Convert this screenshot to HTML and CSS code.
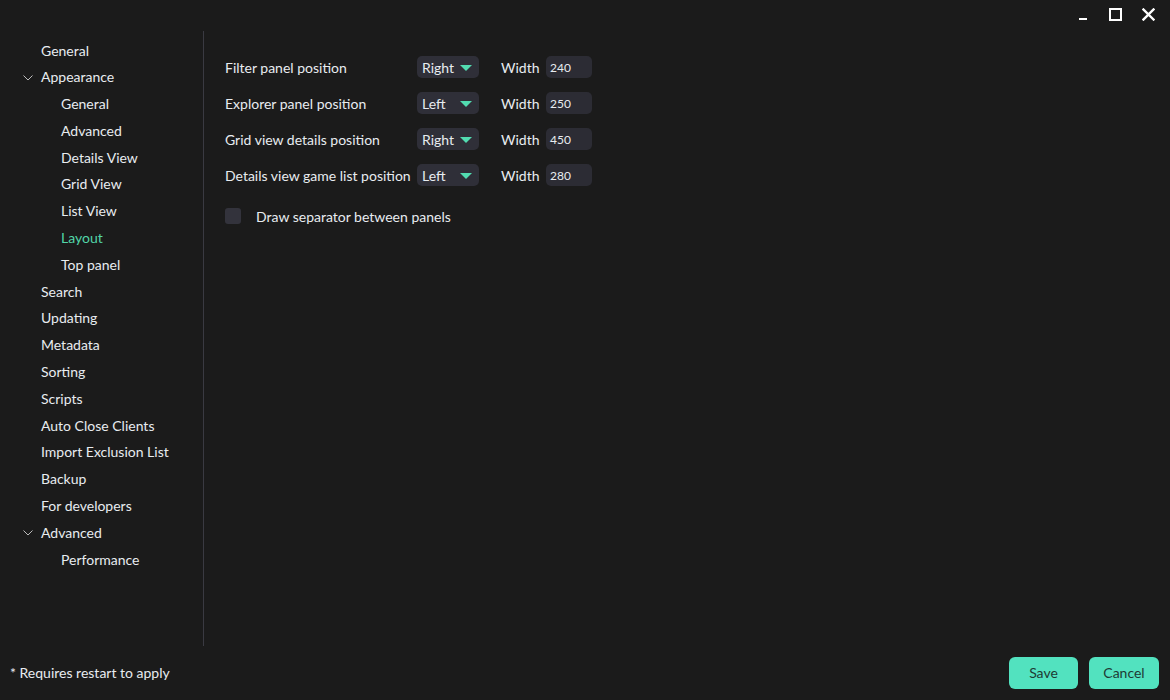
FILE: index.html
```html
<!DOCTYPE html>
<html>
<head>
<meta charset="utf-8">
<link rel="stylesheet" href="styles.css">
</head>
<body>
<div class="window">
  <div class="titlebar">
    <button class="tb-btn" aria-label="Minimize"><svg width="12" height="12" viewBox="0 0 12 12"><rect x="2" y="10" width="8" height="2" fill="#fff"/></svg></button>
    <button class="tb-btn" aria-label="Maximize"><svg width="13" height="13" viewBox="0 0 13 13"><rect x="1" y="1" width="11" height="11" fill="none" stroke="#fff" stroke-width="2"/></svg></button>
    <button class="tb-btn" aria-label="Close"><svg width="13" height="13" viewBox="0 0 13 13"><path d="M1.5 1.5 L11.5 11.5 M11.5 1.5 L1.5 11.5" stroke="#fff" stroke-width="2.4" stroke-linecap="square"/></svg></button>
  </div>
  <div class="main">
    <nav class="sidebar">
      <div class="item l1">General</div>
      <div class="item l1"><span class="chev"><svg width="10" height="6" viewBox="0 0 10 6"><path d="M0.5 0.5 L5 5 L9.5 0.5" fill="none" stroke="#bbb" stroke-width="1"/></svg></span>Appearance</div>
      <div class="item l2">General</div>
      <div class="item l2">Advanced</div>
      <div class="item l2">Details View</div>
      <div class="item l2">Grid View</div>
      <div class="item l2">List View</div>
      <div class="item l2 active">Layout</div>
      <div class="item l2">Top panel</div>
      <div class="item l1">Search</div>
      <div class="item l1">Updating</div>
      <div class="item l1">Metadata</div>
      <div class="item l1">Sorting</div>
      <div class="item l1">Scripts</div>
      <div class="item l1">Auto Close Clients</div>
      <div class="item l1">Import Exclusion List</div>
      <div class="item l1">Backup</div>
      <div class="item l1">For developers</div>
      <div class="item l1"><span class="chev"><svg width="10" height="6" viewBox="0 0 10 6"><path d="M0.5 0.5 L5 5 L9.5 0.5" fill="none" stroke="#bbb" stroke-width="1"/></svg></span>Advanced</div>
      <div class="item l2">Performance</div>
    </nav>
    <section class="content">
      <div class="row">
        <span class="label">Filter panel position</span>
        <span class="combo">Right<i class="caret"></i></span>
        <span class="wlabel">Width</span>
        <span class="input">240</span>
      </div>
      <div class="row">
        <span class="label">Explorer panel position</span>
        <span class="combo">Left<i class="caret"></i></span>
        <span class="wlabel">Width</span>
        <span class="input">250</span>
      </div>
      <div class="row">
        <span class="label">Grid view details position</span>
        <span class="combo">Right<i class="caret"></i></span>
        <span class="wlabel">Width</span>
        <span class="input">450</span>
      </div>
      <div class="row">
        <span class="label">Details view game list position</span>
        <span class="combo">Left<i class="caret"></i></span>
        <span class="wlabel">Width</span>
        <span class="input">280</span>
      </div>
      <label class="check">
        <span class="box"></span>
        <span>Draw separator between panels</span>
      </label>
    </section>
  </div>
  <div class="footer">
    <span class="note">* Requires restart to apply</span>
    <div class="buttons">
      <button class="btn save">Save</button>
      <button class="btn cancel">Cancel</button>
    </div>
  </div>
</div>
</body>
</html>
```
FILE: styles.css
```css
html, body {
  margin: 0;
  padding: 0;
  background: #1b1b1b;
}
body {
  font-family: Lato, "Noto Sans", sans-serif;
  font-size: 14px;
  color: #e8ecf0;
}
.window {
  width: 1170px;
  height: 700px;
  display: flex;
  flex-direction: column;
  background: #1b1b1b;
  overflow: hidden;
}
.titlebar {
  height: 31px;
  display: flex;
  justify-content: flex-end;
  align-items: flex-start;
  padding-right: 5px;
  box-sizing: border-box;
}
.tb-btn {
  width: 33px;
  height: 28px;
  background: none;
  border: none;
  padding: 0;
  display: flex;
  align-items: center;
  justify-content: center;
}
.main {
  height: 615px;
  display: flex;
}
.sidebar {
  width: 204px;
  box-sizing: border-box;
  border-right: 1px solid #3a3a42;
  padding-top: 6.5px;
}
.item {
  height: 26.8px;
  line-height: 26.8px;
  white-space: nowrap;
  position: relative;
}
.item.l1 { padding-left: 41px; }
.item.l2 { padding-left: 61px; }
.item.active { color: #52d6a8; }
.chev {
  position: absolute;
  left: 23px;
  top: 0;
  height: 26.8px;
  display: flex;
  align-items: center;
}
.content {
  flex: 1;
  padding: 18px 0 0 21px;
}
.row {
  height: 36px;
  display: flex;
  align-items: center;
}
.label {
  width: 192px;
  white-space: nowrap;
}
.combo {
  width: 62px;
  height: 22px;
  box-sizing: border-box;
  background: #2f2f38;
  border-radius: 5px;
  padding-left: 5px;
  display: flex;
  align-items: center;
  position: relative;
}
.caret {
  position: absolute;
  right: 7px;
  top: 9px;
  width: 0;
  height: 0;
  border-left: 6px solid transparent;
  border-right: 6px solid transparent;
  border-top: 6px solid #52dcb0;
}
.wlabel {
  margin-left: 22px;
  width: 45px;
}
.input {
  width: 46px;
  height: 22px;
  box-sizing: border-box;
  background: #2c2c34;
  border-radius: 5px;
  padding-left: 4px;
  font-size: 12px;
  line-height: 22px;
  padding-top: 1px;
}
.check {
  display: flex;
  align-items: center;
  margin-top: 15px;
  height: 16px;
}
.box {
  width: 16px;
  height: 16px;
  border-radius: 3px;
  background: #33333c;
  margin-right: 15px;
}
.footer {
  flex: 1;
  display: flex;
  align-items: center;
  justify-content: space-between;
  padding: 0 11px 0 10px;
}
.note {
  margin-bottom: 2px;
}
.buttons {
  display: flex;
  gap: 11px;
}
.btn {
  height: 32px;
  border: none;
  border-radius: 6px;
  background: #52e2bf;
  color: #1e3a34;
  font-family: Lato, "Noto Sans", sans-serif;
  font-size: 14px;
  padding: 0 0 2px 0;
}
.btn.save { width: 69px; }
.btn.cancel { width: 70px; }
```
